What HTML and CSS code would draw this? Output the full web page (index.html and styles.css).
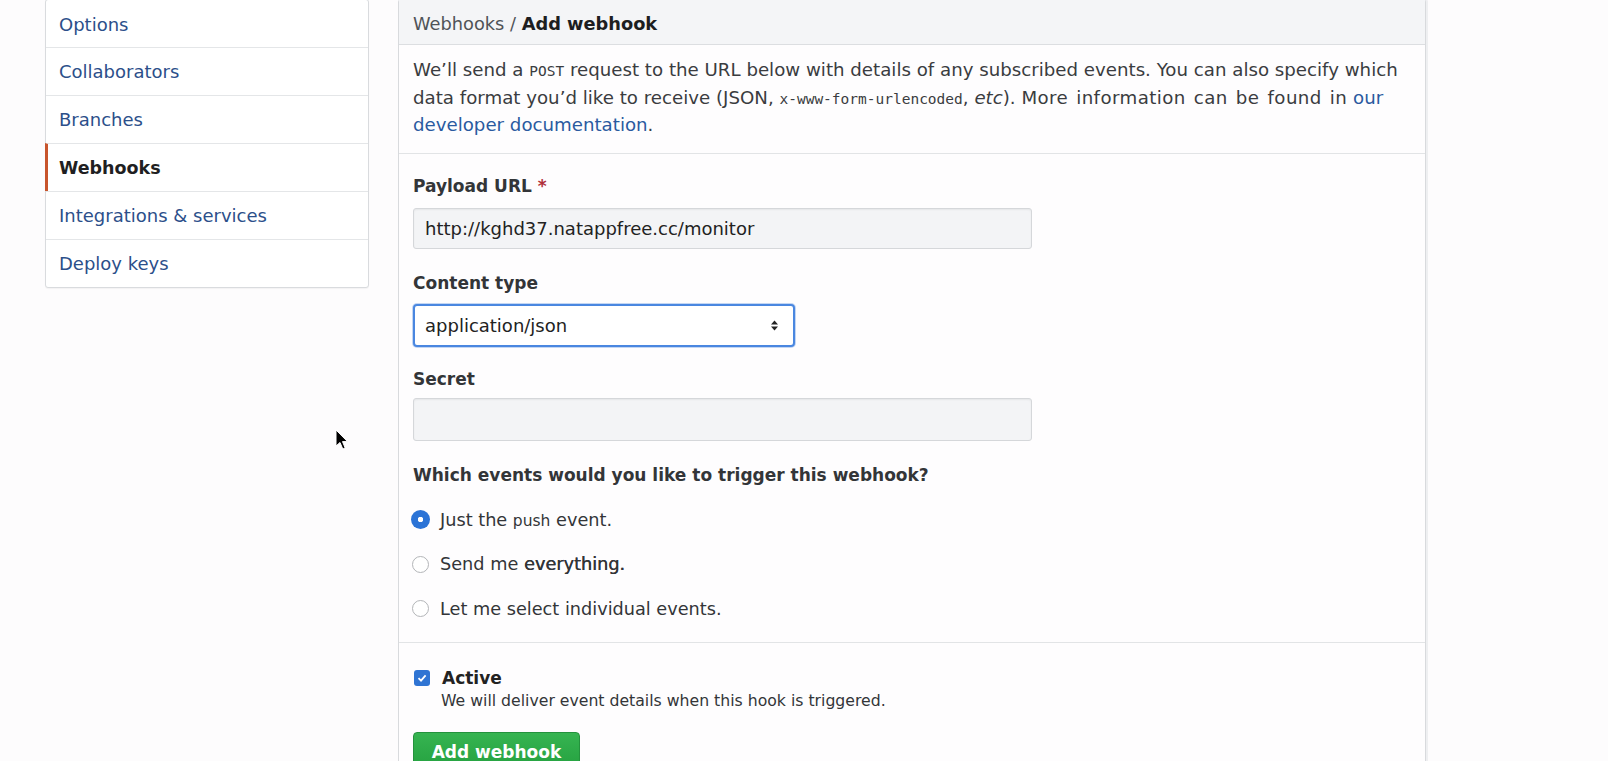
FILE: index.html
```html
<!DOCTYPE html>
<html>
<head>
<meta charset="utf-8">
<link rel="stylesheet" href="styles.css">
</head>
<body>
<div class="layout">
  <nav class="menu">
    <a class="menu-item">Options</a>
    <a class="menu-item">Collaborators</a>
    <a class="menu-item">Branches</a>
    <a class="menu-item selected">Webhooks</a>
    <a class="menu-item">Integrations &amp; services</a>
    <a class="menu-item">Deploy keys</a>
  </nav>
  <main class="panel">
    <div class="panel-head">Webhooks / <strong>Add webhook</strong></div>
    <div class="panel-desc">
      We’ll send a <code class="mono">POST</code> request to the URL below with details of any subscribed events. You can also specify which data format you’d like to receive (JSON, <code class="mono">x-www-form-urlencoded</code>, <em>etc</em>). <span class="wide">More information can be found in</span> <a class="link">our developer documentation</a>.
    </div>
    <div class="panel-form">
      <label class="label">Payload URL <span class="req">*</span></label>
      <div class="input">http://kghd37.natappfree.cc/monitor</div>
      <label class="label label-gap">Content type</label>
      <div class="select">
        <span>application/json</span>
        <svg class="arrows" width="9" height="13" viewBox="0 0 9 13"><path d="M4.5 1.5 L8 5.5 H1 Z M4.5 11.5 L8 7.5 H1 Z" fill="#222"/></svg>
      </div>
      <label class="label label-gap2">Secret</label>
      <div class="input input-secret"></div>
      <div class="question">Which events would you like to trigger this webhook?</div>
      <div class="radios">
        <div class="radio-row"><span class="radio on"></span><span>Just the <span class="small">push</span> event.</span></div>
        <div class="radio-row"><span class="radio"></span><span>Send me <span class="semi">everything.</span></span></div>
        <div class="radio-row"><span class="radio"></span><span>Let me select individual events.</span></div>
      </div>
    </div>
    <div class="panel-active">
      <div class="check-row">
        <span class="checkbox"><svg width="12" height="12" viewBox="0 0 12 12"><path d="M2.5 6.2 L5 8.6 L9.6 3.4" fill="none" stroke="#fff" stroke-width="1.8"/></svg></span>
        <span class="active-label">Active</span>
      </div>
      <div class="note">We will deliver event details when this hook is triggered.</div>
      <button class="btn">Add webhook</button>
    </div>
  </main>
</div>
<svg class="cursor" width="14" height="22" viewBox="0 0 14 22"><path d="M1 1 L1 17 L5 13.5 L7.8 20 L10.2 19 L7.5 12.6 L12.5 12.6 Z" fill="#000" stroke="#fff" stroke-width="1"/></svg>
</body>
</html>
```
FILE: styles.css
```css
* { box-sizing: border-box; }
html, body {
  margin: 0;
  padding: 0;
  background: #fdfcfd;
  font-family: "DejaVu Sans", Verdana, sans-serif;
  color: #2b2d30;
  overflow: hidden;
  height: 761px;
}
.layout {
  display: flex;
  align-items: flex-start;
  padding-left: 45px;
  gap: 29px;
}
.menu {
  width: 324px;
  margin-top: -1px;
  background: #fff;
  border: 1px solid #d9dbde;
  border-radius: 3px;
  display: flex;
  flex-direction: column;
  box-shadow: 0 1px 1px rgba(0,0,0,0.04);
}
.menu-item {
  display: block;
  height: 48px;
  line-height: 48px;
  padding-left: 13px;
  font-size: 18px;
  color: #2c4f8a;
  border-top: 1px solid #e4e6e8;
}
.menu-item:first-child { border-top: none; height: 47px; line-height: 49px; }
.menu-item.selected {
  color: #1f1f22;
  font-weight: bold;
  font-size: 17.5px;
  border-left: 3px solid #c8552d;
  padding-left: 11px;
  margin-left: -1px;
}
.panel {
  width: 1028px;
  margin-top: -1px;
  background: #fefdfe;
  border: 1px solid #d8dadd;
  border-radius: 3px;
  box-shadow: 2px 0 0 #eeeff1;
  height: 790px;
}
.panel-head {
  height: 45px;
  line-height: 47px;
  background: #f4f5f7;
  border-bottom: 1px solid #dcdee1;
  padding-left: 14px;
  font-size: 17.8px;
  color: #505357;
}
.panel-head strong { color: #1d1e21; }
.panel-desc {
  padding: 12px 6px 14px 14px;
  font-size: 18.2px;
  line-height: 26.5px;
  color: #3a3c40;
  border-bottom: 1px solid #e2e4e6;
}
.wide { word-spacing: 2px; letter-spacing: 0.4px; }
.mono {
  font-family: "DejaVu Sans Mono", monospace;
  font-size: 14.5px;
}
.link { color: #2a5aa0; }
.panel-form {
  padding: 20px 14px 11px 14px;
  border-bottom: 1px solid #e2e4e6;
}
.label {
  display: block;
  font-size: 17px;
  font-weight: bold;
  line-height: 24px;
  color: #333538;
}
.label-gap { margin-top: 22px; }
.label-gap2 { margin-top: 20px; }
.req { color: #b0303a; }
.input {
  margin-top: 10px;
  width: 619px;
  height: 41px;
  background: #f3f4f6;
  border: 1px solid #d5d7da;
  border-radius: 3px;
  box-shadow: inset 0 1px 2px rgba(0,0,0,0.06);
  font-size: 18px;
  line-height: 39px;
  padding-left: 11px;
  color: #222;
}
.input-secret { margin-top: 7px; height: 43px; }
.select {
  margin-top: 9px;
  width: 382px;
  height: 43px;
  border: 2px solid #4a87e0;
  border-radius: 4px;
  background: #fff;
  box-shadow: 0 0 0 1px #c3d6f3;
  display: flex;
  align-items: center;
  justify-content: space-between;
  padding: 0 14px 0 10px;
  font-size: 18px;
  color: #222;
}
.question {
  margin-top: 22px;
  font-size: 17px;
  font-weight: bold;
  line-height: 24px;
  color: #333538;
}
.radios {
  margin-top: 11px;
  display: flex;
  flex-direction: column;
}
.radio-row {
  display: flex;
  align-items: center;
  gap: 11px;
  height: 44.5px;
  font-size: 17.7px;
  color: #333538;
}
.radio {
  width: 17px;
  height: 17px;
  border-radius: 50%;
  border: 1px solid #b3b5b8;
  background: #fff;
  flex: none;
  margin-left: -1px;
}
.radio.on {
  background: radial-gradient(circle, #fff 0 2.5px, #2b73d6 3px);
  border: none;
  width: 19px;
  height: 19px;
  margin-left: -2px;
  margin-right: -1px;
}
.small { font-size: 15.5px; }
.semi { text-shadow: 0.4px 0 0 #333538; }
.panel-active {
  padding: 22px 14px 0 14px;
}
.check-row {
  display: flex;
  align-items: center;
  gap: 12px;
  height: 26px;
}
.checkbox {
  width: 16px;
  height: 16px;
  background: #2f74d3;
  border-radius: 3px;
  display: flex;
  align-items: center;
  justify-content: center;
  margin-left: 1px;
}
.active-label {
  font-size: 17px;
  font-weight: bold;
  color: #222;
}
.note {
  padding-left: 28px;
  font-size: 15.7px;
  line-height: 20px;
  color: #333538;
}
.btn {
  margin-top: 21px;
  height: 40px;
  width: 167px;
  border: 1px solid #24923d;
  border-radius: 4px;
  background: linear-gradient(#36b451, #24a03e);
  color: #fff;
  font-family: "DejaVu Sans", Verdana, sans-serif;
  font-size: 17px;
  font-weight: bold;
  padding: 0;
  text-align: center;
  line-height: 38px;
  display: block;
}
.cursor {
  position: absolute;
  left: 335px;
  top: 429px;
}
```
